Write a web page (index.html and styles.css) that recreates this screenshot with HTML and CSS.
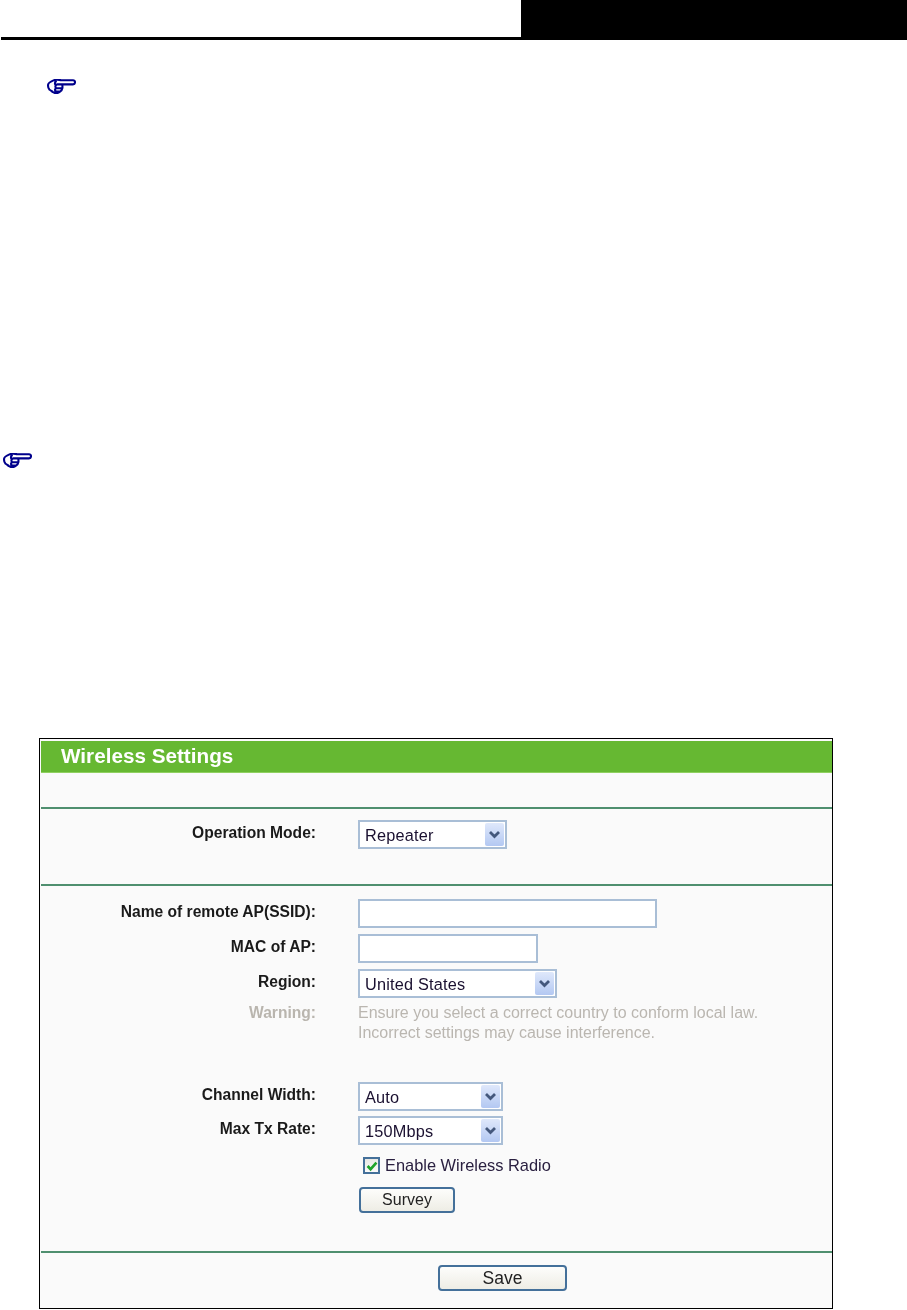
FILE: index.html
```html
<!DOCTYPE html>
<html lang="en">
<head>
<meta charset="utf-8">
<title>Wireless Settings</title>
<link rel="stylesheet" href="styles.css">
</head>
<body>
<header class="top">
  <div class="top-line"></div>
  <div class="top-black"></div>
</header>
<div class="note note-a">
  <svg class="hand" width="29" height="15" viewBox="0 0 29 15"><path d="M28 3.2C28 1.8 27.2 1.2 26 1.2H14C11.5 .4 8.5 .6 6.5 1.4 4 2.4 1.4 3.6 1.1 5.6.9 7.6 1.2 9.4 2.4 10.6 3.8 11.2 4.8 12.4 6 13.2 8 14.4 10.8 14.2 12.4 13.2 14.4 12 15.2 10.6 15.4 9 15.6 7.6 15.4 6.4 15.2 5.4H26C27.2 5.4 28 4.6 28 3.2ZM15.2 5.4H10.4C8.2 5.6 7.8 8.6 9.4 9.2H14.6M9.4 9.2C7.4 9.8 7.6 12 9.4 12.6H13M9.4 1.6C7.8 3 7.6 4.6 8.6 6.2" /></svg>
</div>
<div class="note note-b">
  <svg class="hand" width="29" height="15" viewBox="0 0 29 15"><path d="M28 3.2C28 1.8 27.2 1.2 26 1.2H14C11.5 .4 8.5 .6 6.5 1.4 4 2.4 1.4 3.6 1.1 5.6.9 7.6 1.2 9.4 2.4 10.6 3.8 11.2 4.8 12.4 6 13.2 8 14.4 10.8 14.2 12.4 13.2 14.4 12 15.2 10.6 15.4 9 15.6 7.6 15.4 6.4 15.2 5.4H26C27.2 5.4 28 4.6 28 3.2ZM15.2 5.4H10.4C8.2 5.6 7.8 8.6 9.4 9.2H14.6M9.4 9.2C7.4 9.8 7.6 12 9.4 12.6H13M9.4 1.6C7.8 3 7.6 4.6 8.6 6.2" /></svg>
</div>
<main class="panel">
  <h1 class="title">Wireless Settings</h1>
  <div class="spacer"></div>
  <section class="sec sec-mode">
    <div class="row">
      <label class="lbl">Operation Mode:</label>
      <div class="sel w149"><span>Repeater</span><svg class="arrow" width="19" height="23" viewBox="0 0 19 23"><path d="M5 9l4.5 4.5L14 9" /></svg></div>
    </div>
  </section>
  <section class="sec sec-ap">
    <div class="row"><label class="lbl">Name of remote AP(SSID):</label><input class="txt w299" type="text"></div>
    <div class="row"><label class="lbl">MAC of AP:</label><input class="txt w180" type="text"></div>
    <div class="row"><label class="lbl">Region:</label>
      <div class="sel w199"><span>United States</span><svg class="arrow" width="19" height="23" viewBox="0 0 19 23"><path d="M5 9l4.5 4.5L14 9" /></svg></div>
    </div>
    <div class="row warn"><label class="lbl">Warning:</label>
      <p class="warn-text">Ensure you select a correct country to conform local law.<br>Incorrect settings may cause interference.</p>
    </div>
    <div class="row r-cw"><label class="lbl">Channel Width:</label>
      <div class="sel w145"><span>Auto</span><svg class="arrow" width="19" height="23" viewBox="0 0 19 23"><path d="M5 9l4.5 4.5L14 9" /></svg></div>
    </div>
    <div class="row"><label class="lbl">Max Tx Rate:</label>
      <div class="sel w145"><span>150Mbps</span><svg class="arrow" width="19" height="23" viewBox="0 0 19 23"><path d="M5 9l4.5 4.5L14 9" /></svg></div>
    </div>
    <div class="row r-check">
      <div class="check"><svg width="14" height="14" viewBox="0 0 14 14"><path d="M2.6 7l3 3.2L11.4 3.6" /></svg></div>
      <span class="check-text">Enable Wireless Radio</span>
    </div>
    <div class="row r-survey"><button class="btn btn-survey" type="button">Survey</button></div>
  </section>
  <section class="sec sec-save"><button class="btn btn-save" type="button">Save</button></section>
</main>
</body>
</html>
```
FILE: styles.css
```css
* { box-sizing: border-box; }
html, body { margin: 0; padding: 0; background: #fff; }
body { width: 907px; height: 1310px; overflow: hidden; font-family: "Liberation Sans", Arial, sans-serif; color: #1a1a1a; }
.top { display: flex; height: 40px; padding-left: 1px; align-items: flex-end; }
.top-line { width: 520px; height: 3px; background: #000; }
.top-black { flex: 1; height: 40px; background: #000; }
.note { display: flex; height: 15px; }
.note-a { margin-top: 39px; padding-left: 47px; }
.note-b { margin-top: 359px; padding-left: 3px; }
.hand { display: block; }
.hand path { fill: none; stroke: #00008c; stroke-width: 2.1; stroke-linejoin: round; }
.panel { margin: 270px 0 0 39px; width: 794px; height: 571px; border: 1px solid #000; background: #fafafa; padding: 2px 0 0 1px; }
.title { margin: 0; height: 32px; background: #66b832; border-bottom: 1px solid #8fd060; color: #fff; font-size: 20.7px; line-height: 30px; font-weight: bold; padding-left: 20px; white-space: nowrap; filter: blur(.3px); }
.spacer { height: 34px; }
.sec { border-top: 2px solid #4f8f6f; display: flex; flex-direction: column; }
.sec-mode { height: 77px; padding-top: 11px; }
.sec-ap { height: 367px; padding-top: 13px; }
.sec-save { padding: 12px 0 0 397px; }
.row { display: flex; padding-bottom: 6px; filter: blur(.3px); }
.lbl { width: 275px; margin-right: 42px; text-align: right; font-size: 15.6px; font-weight: bold; line-height: 25px; white-space: nowrap; }
.txt, .sel { height: 29px; border: 2px solid #a9bed6; background: #fff; border-radius: 0; }
.txt { display: block; padding: 0; }
.sel { position: relative; font-size: 16.3px; letter-spacing: .2px; line-height: 26px; padding-left: 5px; color: #1a1030; }
.w149 { width: 149px; } .w299 { width: 299px; } .w180 { width: 180px; } .w199 { width: 199px; } .w145 { width: 145px; }
.arrow { position: absolute; top: 1px; right: 1px; background: linear-gradient(#dfe8fb, #b3c8f2); border-radius: 2px; }
.arrow path { fill: none; stroke: #44587c; stroke-width: 2.8; }
.warn { height: 79px; padding: 0; margin-top: -1px; }
.warn .lbl { color: #b9b5ae; line-height: 20px; }
.warn-text { margin: 0; color: #bab6b0; font-size: 16px; line-height: 20px; white-space: nowrap; }
.r-cw { padding-bottom: 5px; }
.r-check { padding: 6px 0 0 322px; height: 36px; align-items: flex-start; }
.check { width: 17px; height: 17px; border: 2px solid #44709a; background: linear-gradient(#e8e8e4, #fafafa); margin-right: 5px; }
.check svg { display: block; }
.check path { fill: none; stroke: #1fa32a; stroke-width: 2.6; }
.check-text { font-size: 16.4px; line-height: 16px; color: #2a2040; white-space: nowrap; }
.r-survey { padding: 0 0 0 318px; }
.btn { font-family: inherit; color: #222; height: 26px; padding: 0; border: 2px solid #44709a; border-radius: 4px; background: linear-gradient(#fdfdfb, #eeede5); filter: blur(.25px); }
.btn-survey { width: 96px; font-size: 16px; }
.btn-save { width: 129px; font-size: 17.5px; }
```
